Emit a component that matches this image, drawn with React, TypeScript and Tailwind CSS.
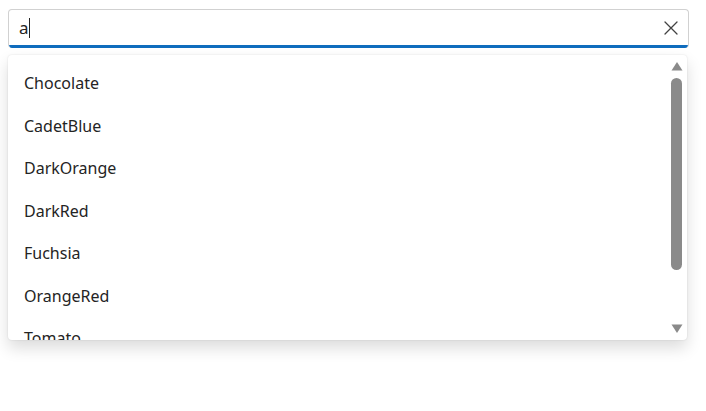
import React from "react";

const items = ["Chocolate", "CadetBlue", "DarkOrange", "DarkRed", "Fuchsia", "OrangeRed", "Tomato"];

export default function App() {
  return (
    <div className="w-[706px] h-[411px] bg-white" style={{ fontFamily: '"Noto Sans", "Open Sans", sans-serif' }}>
      <div className="pt-[9px] px-[8px] w-[697px]">
        <div className="h-[39px] rounded-[4px] border border-[#d1d1d1] border-b-0 overflow-hidden flex flex-col">
          <div className="flex-1 flex items-center pl-[10px] pr-[8px]">
            <span className="text-[17px] text-[#242424] leading-none">a</span>
            <span className="w-[1px] h-[20px] bg-[#242424]"></span>
            <div className="flex-1"></div>
            <svg width="16" height="16" viewBox="0 0 16 16" className="mr-[1px]">
              <path d="M2 2 L14 14 M14 2 L2 14" stroke="#424242" strokeWidth="1.3" strokeLinecap="round" />
            </svg>
          </div>
          <div className="h-[3px] bg-[#0f6cbd]"></div>
        </div>
      </div>
      <div className="mt-[7px] ml-[8px] w-[679px] h-[285px] bg-white rounded-[4px] flex overflow-hidden shadow-[0_8px_16px_rgba(0,0,0,0.14),0_0_2px_rgba(0,0,0,0.12)]">
        <div className="flex-1 pt-[7px] overflow-hidden">
          {items.map((t) => (
            <div key={t} className="h-[42.5px] flex items-center pl-[16px] text-[16px] text-[#242424]">
              {t}
            </div>
          ))}
        </div>
        <div className="w-[17px] flex flex-col items-center pr-[4px] pt-[6px] pb-[6px]">
          <svg width="12" height="10" viewBox="0 0 12 10">
            <path d="M6 1 L11.5 9.5 L0.5 9.5 Z" fill="#8a8a8a" />
          </svg>
          <div className="mt-[7px] w-[11px] h-[192px] rounded-full bg-[#8a8a8a]"></div>
          <div className="flex-1"></div>
          <svg width="12" height="10" viewBox="0 0 12 10">
            <path d="M0.5 0.5 L11.5 0.5 L6 9 Z" fill="#8a8a8a" />
          </svg>
        </div>
      </div>
    </div>
  );
}
